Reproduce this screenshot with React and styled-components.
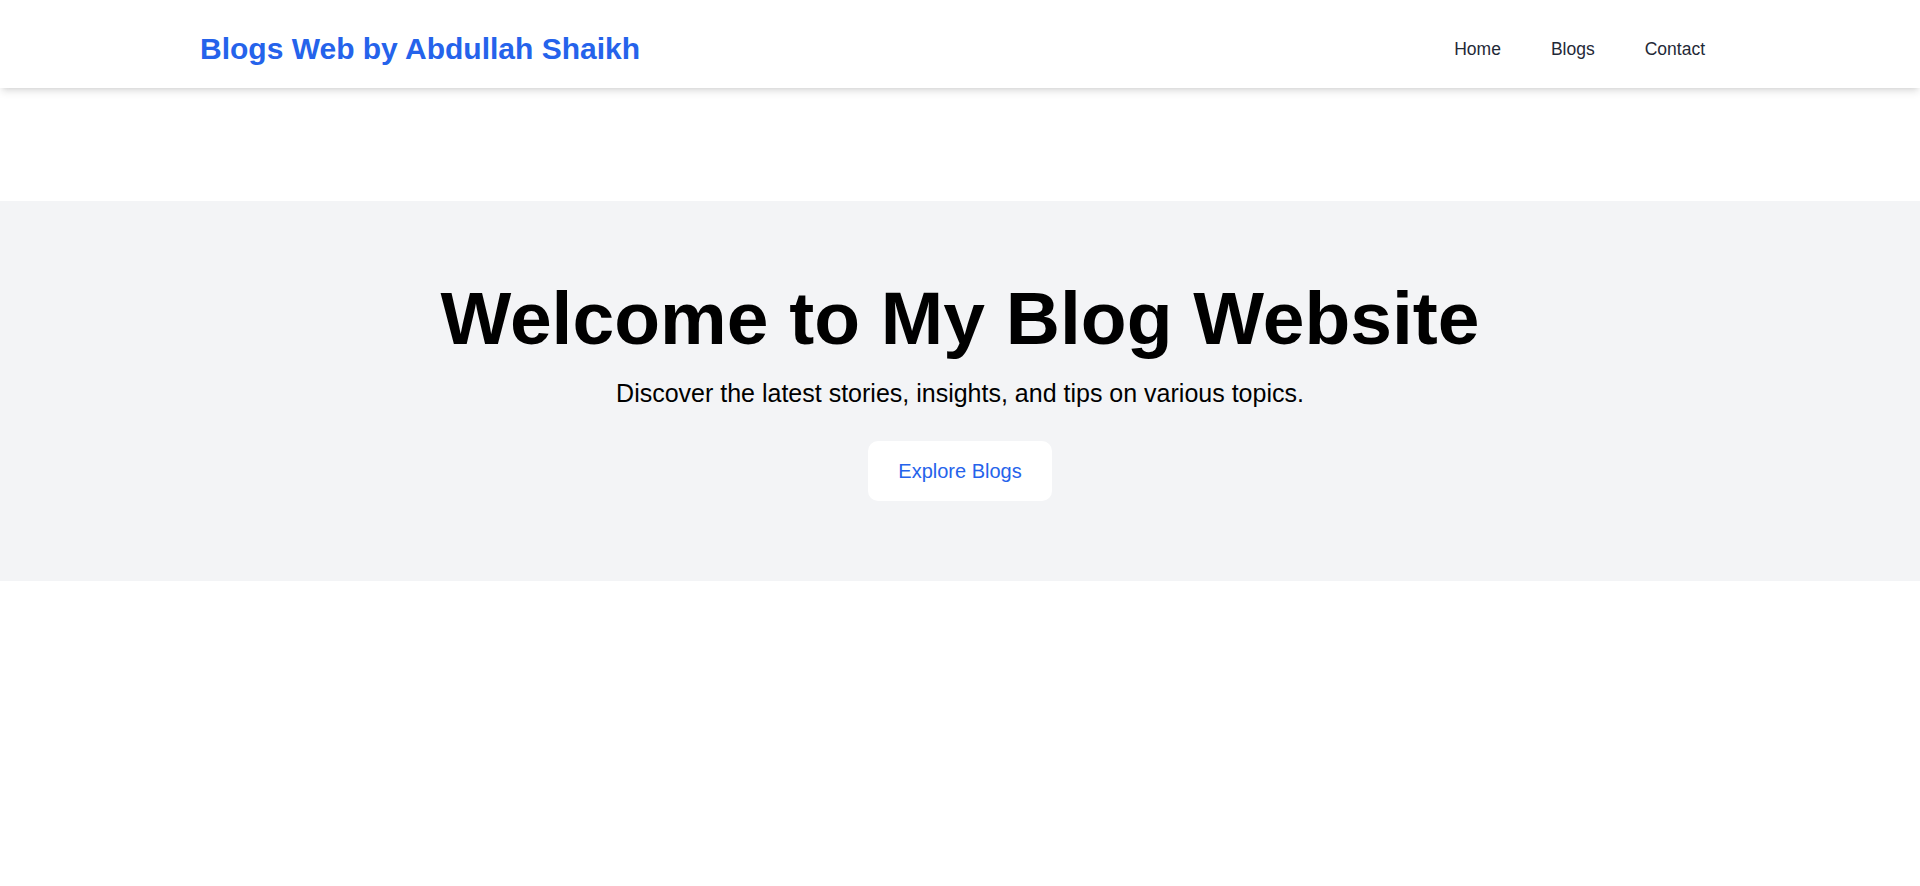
import React from "react";
import styled, { createGlobalStyle } from "styled-components";

const GlobalStyle = createGlobalStyle`
  *, *::before, *::after { box-sizing: border-box; }
  html, body { margin: 0; padding: 0; background: #ffffff; }
  body {
    font-family: "Liberation Sans", Arial, Helvetica, sans-serif;
    color: #000;
  }
  #root { min-height: 886px; }
`;

const Header = styled.header`
  background: #ffffff;
  box-shadow: 0 5px 7.5px -1.25px rgba(0, 0, 0, 0.1),
    0 2.5px 5px -2.5px rgba(0, 0, 0, 0.1);
  position: relative;
  z-index: 1;
`;

const HeaderInner = styled.div`
  display: flex;
  align-items: center;
  justify-content: space-between;
  height: 88px;
  padding: 10px 215px 0 200px;
`;

const Brand = styled.a`
  font-size: 30px;
  line-height: 40px;
  font-weight: 700;
  color: #2563eb;
  text-decoration: none;
`;

const Nav = styled.nav`
  display: flex;
  align-items: center;
  gap: 50px;
`;

const NavLink = styled.a`
  font-size: 17.5px;
  line-height: 25px;
  color: #1f2937;
  text-decoration: none;
`;

const Hero = styled.section`
  margin-top: 113px;
  background: #f3f4f6;
  padding: 80px 20px;
  display: flex;
  flex-direction: column;
  align-items: center;
  text-align: center;
`;

const Title = styled.h1`
  margin: 0 0 20px;
  font-size: 75px;
  line-height: 75px;
  font-weight: 700;
  color: #000;
`;

const Subtitle = styled.p`
  margin: 0 0 30px;
  font-size: 25px;
  line-height: 35px;
  color: #000;
`;

const Button = styled.a`
  display: inline-block;
  background: #ffffff;
  color: #2563eb;
  font-size: 20px;
  line-height: 30px;
  padding: 15px 30px;
  border-radius: 10px;
  text-decoration: none;
`;

export default function App() {
  return (
    <>
      <GlobalStyle />
      <Header>
        <HeaderInner>
          <Brand href="#">Blogs Web by Abdullah Shaikh</Brand>
          <Nav>
            <NavLink href="#">Home</NavLink>
            <NavLink href="#">Blogs</NavLink>
            <NavLink href="#">Contact</NavLink>
          </Nav>
        </HeaderInner>
      </Header>
      <Hero>
        <Title>Welcome to My Blog Website</Title>
        <Subtitle>Discover the latest stories, insights, and tips on various topics.</Subtitle>
        <Button href="#">Explore Blogs</Button>
      </Hero>
    </>
  );
}
